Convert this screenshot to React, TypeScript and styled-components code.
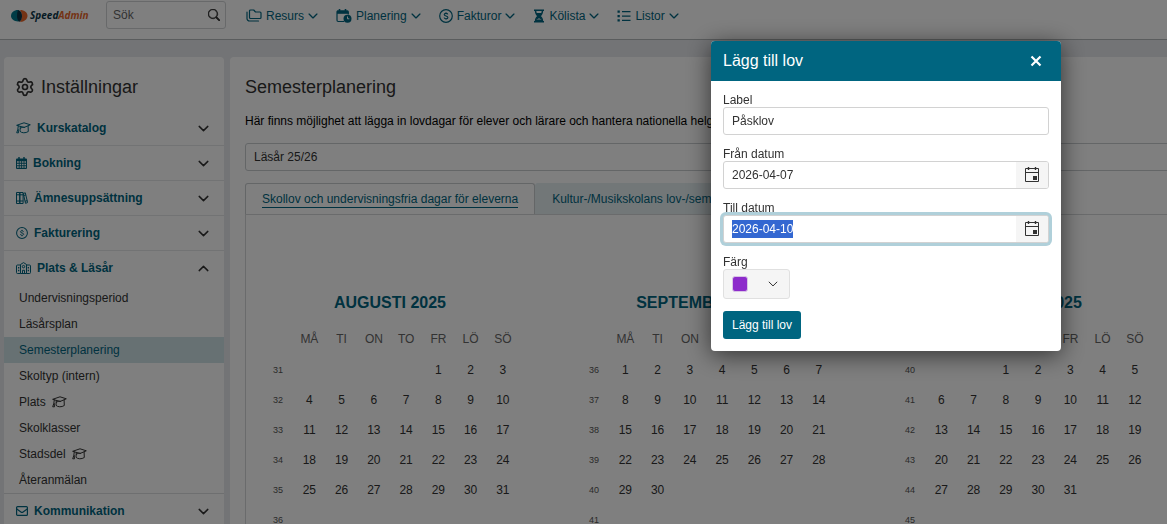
import React from "react";
import styled, { createGlobalStyle, css } from "styled-components";
import { BsSearch } from "react-icons/bs";
import { Settings } from "lucide-react";

const Global = createGlobalStyle`
  *, *::before, *::after { box-sizing: border-box; }
  body {
    margin: 0;
    background: #e6e8ec;
    color: #323232;
    font: 12px/18px "Liberation Sans", Arial, sans-serif;
    overflow: hidden;
  }
  button, input, select { font: inherit; color: inherit; }
  a { color: inherit; text-decoration: none; }
  h1, h2, p { margin: 0; font-weight: 400; }
  svg { flex: none; display: block; }
`;

const teal = "#006580";

const Header = styled.header`
  display: flex;
  align-items: flex-start;
  height: 40px;
  padding: 1px 11px 0;
  background: #fff;
  border-bottom: 1px solid #b4b8ba;
`;
const Brand = styled.a`
  display: flex;
  width: 95px;
  padding-top: 8px;
`;
const SearchBox = styled.label`
  display: flex;
  align-items: center;
  width: 120px;
  height: 28px;
  padding: 0 5px 0 6px;
  border: 1px solid #d0d3d5;
  border-radius: 3px;
  color: #323232;
  input {
    flex: 1;
    min-width: 0;
    border: 0;
    padding: 0;
    background: none;
    outline: none;
  }
  input::placeholder { color: #666; opacity: 1; }
`;
const Nav = styled.nav`
  display: flex;
  gap: 18px;
  margin-left: 20px;
  padding-top: 6px;
`;
const NavButton = styled.button`
  display: flex;
  align-items: center;
  gap: 4px;
  height: 18px;
  padding: 0;
  border: 0;
  background: none;
  color: ${teal};
`;

const Body = styled.div`
  display: grid;
  grid-template-columns: 220px minmax(0, 1fr);
  gap: 6px;
  min-width: 1225px;
  padding: 17px 0 0 4px;
`;
const Side = styled.aside`
  background: #fff;
  border-radius: 4px 4px 0 0;
  padding-top: 15px;
`;
const SideTitle = styled.h2`
  display: flex;
  align-items: center;
  gap: 6px;
  height: 30px;
  margin-bottom: 9px;
  padding: 0 11px;
  font-size: 18px;
`;
const Group = styled.button<{ $open?: boolean }>`
  display: flex;
  align-items: center;
  gap: 6px;
  width: 100%;
  height: ${(p) => (p.$open ? "34px" : "35px")};
  padding: 0 15px 0 12px;
  border: 0;
  border-bottom: ${(p) => (p.$open ? "0" : "1px solid #e4e6e8")};
  background: none;
  color: ${teal};
  font-weight: 700;
  text-align: left;
  span { flex: 1; }
  svg:last-child { color: #323232; }
`;
const SubList = styled.ul`
  margin: 0;
  padding: 0;
  list-style: none;
  border-bottom: 1px solid #dcdfe1;
`;
const SubLink = styled.a<{ $on?: boolean }>`
  display: flex;
  align-items: center;
  gap: 6px;
  height: 26px;
  padding: 0 15px;
  ${(p) => p.$on && css`background: #cfe2e7; color: ${teal};`}
`;

const Main = styled.main`
  min-width: 0;
  padding: 15px 15px 0;
  background: #fff;
  border-radius: 4px 4px 0 0;
`;
const Title = styled.h1`
  font-size: 18px;
  line-height: 30px;
`;
const Intro = styled.p`
  margin: 10px 0 13px;
  color: #000;
  white-space: nowrap;
`;
const YearSelect = styled.select`
  display: block;
  width: 100%;
  height: 28px;
  padding: 0 8px;
  border: 1px solid #c8cccf;
  border-radius: 3px;
  background: #fff;
  appearance: none;
`;
const Tabs = styled.div`
  display: flex;
  margin-top: 12px;
`;
const Tab = styled.button<{ $on?: boolean }>`
  height: 31px;
  padding: 0 16px;
  border: 1px solid ${(p) => (p.$on ? "#c8cccf" : "#e4eef1")};
  border-bottom: 0;
  border-radius: 3px 3px 0 0;
  background: ${(p) => (p.$on ? "#fff" : "#e4eef1")};
  color: ${teal};
  white-space: nowrap;
  span {
    display: inline-block;
    line-height: 15px;
    border-bottom: 1px solid ${(p) => (p.$on ? teal : "transparent")};
  }
`;
const Panel = styled.section`
  display: grid;
  grid-template-columns: repeat(3, minmax(0, 1fr));
  padding: 68px 0 0 15px;
  border: 1px solid #d4d7d9;
  border-bottom: 0;
`;
const Month = styled.table`
  width: 258px;
  table-layout: fixed;
  border-collapse: collapse;
  text-align: center;
  caption {
    height: 40px;
    line-height: 40px;
    font-size: 16px;
    font-weight: 700;
    color: ${teal};
  }
  thead th {
    height: 32px;
    padding: 0;
    font-weight: 400;
    color: #666;
  }
  tbody th {
    height: 30px;
    padding: 0 0 0 2px;
    font-size: 9px;
    font-weight: 400;
    color: #555;
  }
  td { padding: 0; color: #323232; }
`;

const Backdrop = styled.div`
  position: fixed;
  inset: 0;
  background: rgba(0, 0, 0, 0.5);
`;
const Dialog = styled.div`
  position: absolute;
  top: 41px;
  right: 106px;
  width: 350px;
  border-radius: 4px;
  overflow: hidden;
  background: #fff;
  box-shadow: 0 4px 24px rgba(0, 0, 0, 0.6);
`;
const DialogHead = styled.div`
  display: flex;
  align-items: center;
  justify-content: space-between;
  height: 40px;
  padding: 0 19px 0 12px;
  background: ${teal};
  color: #fff;
  h2 { font-size: 16px; }
  button { display: flex; padding: 0; border: 0; background: none; }
`;
const DialogForm = styled.form`
  display: flex;
  flex-direction: column;
  gap: 8px;
  padding: 8px 12px 12px;
`;
const Field = styled.div`
  display: flex;
  flex-direction: column;
  label { padding-top: 4px; line-height: 14px; }
`;
const InputBox = styled.div<{ $focus?: boolean }>`
  display: flex;
  height: 28px;
  border: 1px solid #d2d2d2;
  border-radius: 3px;
  background: #fff;
  overflow: hidden;
  ${(p) => p.$focus && css`box-shadow: 0 0 0 3px #b0d0da;`}
  input {
    flex: 1;
    min-width: 0;
    border: 0;
    padding: 0 8px;
    background: none;
    outline: none;
  }
  input::selection { background: #3367d1; color: #fff; }
  button {
    display: grid;
    place-items: center;
    width: 32px;
    border: 0;
    padding: 0;
    background: #f5f5f5;
  }
`;
const ColorButton = styled.button`
  display: flex;
  align-items: center;
  justify-content: space-between;
  width: 67px;
  height: 30px;
  padding: 0 11px 0 8px;
  border: 1px solid #e0e0e0;
  border-radius: 3px;
  background: #f5f5f5;
`;
const Swatch = styled.span`
  width: 16px;
  height: 16px;
  border: 1px solid #d9c5e6;
  border-radius: 3px;
  background: #8d2bcb;
`;
const Submit = styled.button`
  align-self: flex-start;
  height: 28px;
  margin-top: 4px;
  padding: 0 9px;
  border: 0;
  border-radius: 3px;
  background: ${teal};
  color: #fff;
`;

const Logo = () => (
  <svg width="82" height="14" viewBox="0 0 82 14" role="img" aria-label="SpeedAdmin">
    <path d="M7 1C3 1 0 3.600 0 6.800S3 12.500 7 12.500c2.500-2 3.500-3.500 3.500-5.700S9.500 3 7 1z" fill="#00788c" />
    <path d="M9 1c4.500 0 7.500 2.500 7.500 5.800S13.500 13 9 13c1.200-1.800 1.800-4 1.800-6.200S10.200 2.500 9 1z" fill="#e8662a" />
    <path d="M7 1c2.800.5 4 3.200 4 5.900 0 2.800-1 5-3 6-1.200-1.800-2-3.700-2-6C6 4.700 6.300 2.800 7 1z" fill="#0b3547" />
    <text x="19" y="10" fontFamily="Noto Sans, sans-serif" fontStyle="italic" fontWeight="700" fontSize="10" fill="#0b3547">Speed<tspan fill="#e8662a">Admin</tspan></text>
  </svg>
);
const Chevron = ({ size = 10, up = false, weight = 1.6 }: { size?: number; up?: boolean; weight?: number }) => (
  <svg width={size} height={size} viewBox="0 0 12 12" fill="none" stroke="currentColor" strokeWidth={weight} strokeLinecap="round" strokeLinejoin="round">
    <path d={up ? "M1.300 8.300 6 3.700l4.700 4.600" : "M1.300 3.700 6 8.300l4.700-4.600"} />
  </svg>
);
const Folders = () => (
  <svg width="16" height="14" viewBox="0 0 16 14" fill="none" stroke="currentColor" strokeLinejoin="round" strokeLinecap="round">
    <path d="M3.500 2.500v6a1 1 0 0 0 1 1h9.500a1 1 0 0 0 1-1V4a1 1 0 0 0-1-1H9.500L7.700 1H4.500a1 1 0 0 0-1 1z" strokeWidth="1.200" />
    <path d="M1 3v6.500a2.500 2.500 0 0 0 2.500 2.500h9" strokeWidth="1.200" />
  </svg>
);
const CalendarClock = () => (
  <svg width="16" height="14" viewBox="0 0 16 14">
    <path d="M3.500 0v2M9.500 0v2" stroke="currentColor" strokeWidth="1.600" />
    <path d="M8 12.500H2.200a1.200 1.200 0 0 1-1.200-1.200V3a1 1 0 0 1 1-1h9.300a1 1 0 0 1 1 1v2.500" fill="none" stroke="currentColor" strokeWidth="1.200" />
    <path d="M1 1.500h11.300v3.300H1z" fill="currentColor" />
    <circle cx="11.500" cy="9.800" r="4" fill="currentColor" />
    <path d="M11.500 7.500v2.300h1.800" fill="none" stroke="#fff" />
  </svg>
);
const Coin = ({ size = 14 }: { size?: number }) => (
  <svg width={size} height={size} viewBox="0 0 14 14" fill="none" stroke="currentColor">
    <circle cx="7" cy="7" r="6.300" strokeWidth="1.200" />
    <path d="M8.800 5.400C8.600 4.700 7.900 4.400 7 4.400c-1.100 0-1.800.5-1.800 1.200 0 1.800 3.700.9 3.700 2.800 0 .8-.8 1.300-1.900 1.300S5.200 9.300 5.100 8.500M7 3.300v1.100M7 9.700v1.100" strokeWidth="1.100" />
  </svg>
);
const Hourglass = () => (
  <svg width="12" height="14" viewBox="0 0 11 14">
    <path d="M.5 1.200h10M.5 12.800h10" stroke="currentColor" strokeWidth="1.500" />
    <path d="M2 1.500c0 3 .8 4.200 2.600 5.500C2.800 8.300 2 9.500 2 12.500M9 1.500c0 3-.8 4.200-2.600 5.500C8.200 8.300 9 9.500 9 12.500" fill="none" stroke="currentColor" strokeWidth="1.400" />
    <path d="M2.600 4h5.800C8 5.500 7 6.500 6.200 7 7.500 8 8.500 9.500 8.800 11L5.500 9.300 2.200 11C2.500 9.500 3.500 8 4.800 7 4 6.500 3 5.500 2.600 4z" fill="currentColor" />
    <path d="M2 10.500h7v2H2z" fill="currentColor" />
  </svg>
);
const List = () => (
  <svg width="14" height="12" viewBox="0 0 14 12" fill="currentColor">
    <path d="M.5.500h2.300v2.300H.5zM.5 4.900h2.300v2.300H.5zM.5 9.300h2.300v2.300H.5zM5 1h8.500v1.300H5zM5 5.400h8.500v1.300H5zM5 9.800h8.500v1.300H5z" />
  </svg>
);
const Envelope = () => (
  <svg width="12" height="10" viewBox="0 0 12 10" fill="none" stroke="currentColor" strokeWidth="1.200" strokeLinejoin="round">
    <rect x=".6" y=".6" width="10.800" height="8.800" rx="1" />
    <path d="m.8 3 4.100 3c.7.500 1.500.5 2.200 0l4.100-3" />
  </svg>
);
const Cap = () => (
  <svg width="15" height="12" viewBox="0 0 15 12" fill="none" stroke="currentColor" strokeLinejoin="round" strokeLinecap="round">
    <path d="M1 3.200 8 .8l6.300 2L8.500 5.300z" />
    <path d="M4.300 4.600 4 9.300c1.500 1.900 5.800 2 8.300.2l-.2-5.400M4.300 6.300c1.200-1 2.800-1.200 4.200-1" />
    <path d="M2.300 3.800 1.800 7.500.7 10.800h1.800L2.200 7.500" />
  </svg>
);
const Calendar = () => (
  <svg width="11" height="12" viewBox="0 0 11 12">
    <path d="M3 0v2M8 0v2" stroke="currentColor" strokeWidth="1.400" />
    <path fill="currentColor" fillRule="evenodd" d="M1 1.500h9a1 1 0 0 1 1 1V11a1 1 0 0 1-1 1H1a1 1 0 0 1-1-1V2.500a1 1 0 0 1 1-1zM1 4.300v1.500h1.800V4.300zm2.600 0v1.500h1.600V4.300zm2.400 0v1.500h1.600V4.300zm2.400 0v1.500H10V4.300zM1 6.700v1.500h1.800V6.700zm2.600 0v1.500h1.600V6.700zm2.400 0v1.500h1.600V6.700zm2.400 0v1.500H10V6.700zM1 9.200v1.600h1.800V9.200zm2.600 0v1.600h1.600V9.200zm2.400 0v1.600h1.600V9.200zm2.400 0v1.600H10V9.200z" />
  </svg>
);
const Books = () => (
  <svg width="12" height="12" viewBox="0 0 12 12" fill="none" stroke="currentColor">
    <path d="M.5.500h3.300v11H.5zM3.800.500h3.300v11H3.800zM.5 2.800h6.600M.5 9h6.600M7.300 1.500l2-.7 2.300 9.800-2.100.7zM7.800 3.500l2.100-.6M9 9.300l2.200-.7" />
  </svg>
);
const School = () => (
  <svg width="15" height="12" viewBox="0 0 15 12" fill="none" stroke="currentColor" strokeLinejoin="round">
    <path d="M4.500 11.500h-3a1 1 0 0 1-1-1V4a1 1 0 0 1 1-1h3M10.500 11.500h3a1 1 0 0 0 1-1V4a1 1 0 0 0-1-1h-3M4.500 11.500V2.500L7.500.6l3 1.900v9zM6.500 11.500V8.300h2v3.200" />
    <circle cx="7.500" cy="4.600" r="1.200" />
    <path d="M2 5.800h1.300M2 8.500h1.300M11.700 5.800H13M11.700 8.500H13" strokeWidth="1.500" />
  </svg>
);
const DateIcon = () => (
  <svg width="16" height="16" viewBox="0 0 16 16" fill="none" stroke="#323232">
    <path d="M1.500 1.500h13v13h-13zM1.500 5.500h13" />
    <path d="M4.500 0v3M11.500 0v3" strokeWidth="1.400" />
    <path d="M9 9h4v4H9z" fill="#323232" stroke="none" />
  </svg>
);
const Cross = () => (
  <svg width="12" height="12" viewBox="0 0 12 12">
    <path d="m1.500 1.500 9 9m0-9-9 9" stroke="#fff" strokeWidth="2.200" />
  </svg>
);

const navItems = [
  { label: "Resurs", icon: <Folders /> },
  { label: "Planering", icon: <CalendarClock /> },
  { label: "Fakturor", icon: <Coin /> },
  { label: "Kölista", icon: <Hourglass /> },
  { label: "Listor", icon: <List /> },
];
const groups = [
  { label: "Kurskatalog", icon: <Cap /> },
  { label: "Bokning", icon: <Calendar /> },
  { label: "Ämnesuppsättning", icon: <Books /> },
  { label: "Fakturering", icon: <Coin size={12} /> },
];
const places = [
  { label: "Undervisningsperiod" },
  { label: "Läsårsplan" },
  { label: "Semesterplanering", on: true },
  { label: "Skoltyp (intern)" },
  { label: "Plats", cap: true },
  { label: "Skolklasser" },
  { label: "Stadsdel", cap: true },
  { label: "Återanmälan" },
];
const months = [
  { name: "AUGUSTI 2025", week: 31, offset: 4, days: 31 },
  { name: "SEPTEMBER 2025", week: 36, offset: 0, days: 30 },
  { name: "OKTOBER 2025", week: 40, offset: 2, days: 31 },
];
const weekdays = ["MÅ", "TI", "ON", "TO", "FR", "LÖ", "SÖ"];

const MonthTable = ({ name, week, offset, days }: (typeof months)[number]) => (
  <Month>
    <caption>{name}</caption>
    <thead>
      <tr>
        <th />
        {weekdays.map((d) => <th key={d} scope="col">{d}</th>)}
      </tr>
    </thead>
    <tbody>
      {[0, 1, 2, 3, 4, 5].map((row) => (
        <tr key={row}>
          <th scope="row">{week + row}</th>
          {weekdays.map((d, i) => {
            const day = row * 7 + i - offset + 1;
            return <td key={d}>{day > 0 && day <= days ? day : ""}</td>;
          })}
        </tr>
      ))}
    </tbody>
  </Month>
);

export default function App() {
  const till = React.useRef<HTMLInputElement>(null);
  React.useEffect(() => {
    till.current?.focus();
    till.current?.select();
  }, []);
  return (
    <>
      <Global />
      <Header>
        <Brand href="#"><Logo /></Brand>
        <SearchBox>
          <input type="text" placeholder="Sök" aria-label="Sök" />
          <BsSearch size={12} stroke="currentColor" strokeWidth={0.8} />
        </SearchBox>
        <Nav>
          {navItems.map((n) => (
            <NavButton key={n.label} type="button">
              {n.icon}{n.label}<Chevron />
            </NavButton>
          ))}
        </Nav>
      </Header>
      <Body>
        <Side>
          <SideTitle><Settings size={20} strokeWidth={2} />Inställningar</SideTitle>
          {groups.map((g) => (
            <Group key={g.label} type="button">
              {g.icon}<span>{g.label}</span><Chevron size={11} />
            </Group>
          ))}
          <Group type="button" $open>
            <School /><span>Plats &amp; Läsår</span><Chevron size={11} up />
          </Group>
          <SubList>
            {places.map((p) => (
              <li key={p.label}>
                <SubLink href="#" $on={p.on}>{p.label}{p.cap && <Cap />}</SubLink>
              </li>
            ))}
          </SubList>
          <Group type="button">
            <Envelope /><span>Kommunikation</span><Chevron size={11} />
          </Group>
        </Side>
        <Main>
          <Title>Semesterplanering</Title>
          <Intro>Här finns möjlighet att lägga in lovdagar för elever och lärare och hantera nationella helgdagar.</Intro>
          <YearSelect aria-label="Läsår"><option>Läsår 25/26</option></YearSelect>
          <Tabs>
            <Tab type="button" $on><span>Skollov och undervisningsfria dagar för eleverna</span></Tab>
            <Tab type="button"><span>Kultur-/Musikskolans lov-/semesterdagar</span></Tab>
          </Tabs>
          <Panel>
            {months.map((m) => <MonthTable key={m.name} {...m} />)}
          </Panel>
        </Main>
      </Body>
      <Backdrop>
        <Dialog role="dialog" aria-label="Lägg till lov">
          <DialogHead>
            <h2>Lägg till lov</h2>
            <button type="button" aria-label="Stäng"><Cross /></button>
          </DialogHead>
          <DialogForm>
            <Field>
              <label htmlFor="label">Label</label>
              <InputBox><input id="label" type="text" defaultValue="Påsklov" /></InputBox>
            </Field>
            <Field>
              <label htmlFor="from">Från datum</label>
              <InputBox>
                <input id="from" type="text" defaultValue="2026-04-07" />
                <button type="button" aria-label="Välj från datum"><DateIcon /></button>
              </InputBox>
            </Field>
            <Field>
              <label htmlFor="till">Till datum</label>
              <InputBox $focus>
                <input id="till" ref={till} type="text" defaultValue="2026-04-10" />
                <button type="button" aria-label="Välj till datum"><DateIcon /></button>
              </InputBox>
            </Field>
            <Field>
              <label htmlFor="color">Färg</label>
              <ColorButton id="color" type="button"><Swatch /><Chevron weight={1.2} /></ColorButton>
            </Field>
            <Submit type="submit">Lägg till lov</Submit>
          </DialogForm>
        </Dialog>
      </Backdrop>
    </>
  );
}
